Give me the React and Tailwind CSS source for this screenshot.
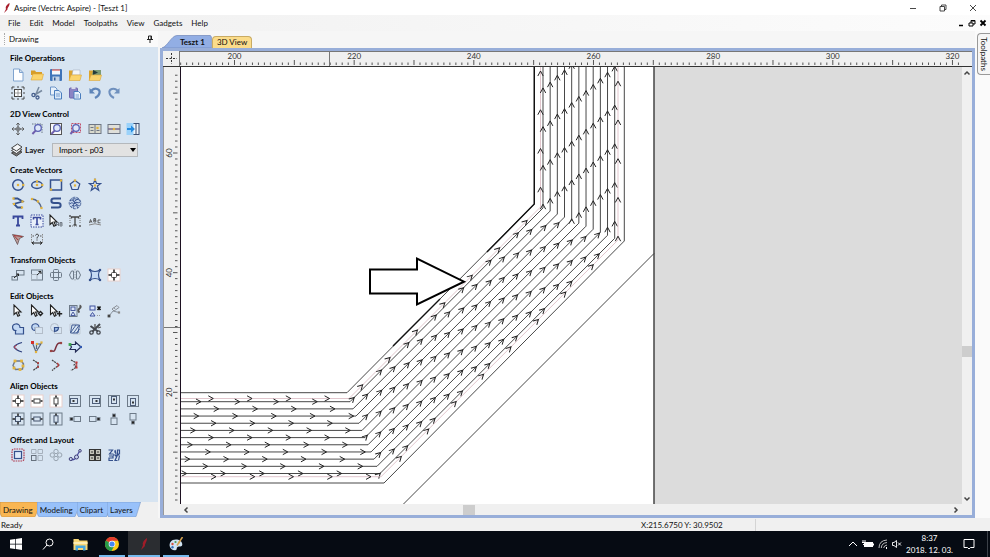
import { useState } from "react";

const NAVY = "#34508c";
const GOLD = "#e2b33c";
const DARK = "#222";
const GREY = "#6d7a88";

// small orange/gold node handle
const Dot = ({ x, y, c = GOLD, r = 1.1 }) => (
  <rect x={x - r} y={y - r} width={r * 2} height={r * 2} fill={c} stroke="none" />
);

const Cursor = ({ x = 0 }) => (
  <path d={`M${3 + x} 1v9.500l2.300-2 1.600 3.800 1.700-.8-1.600-3.500h3z`} fill="#fff" stroke={DARK} strokeWidth="1.100" />
);

const Ticks = () => (
  <path d="M7 1.500v2.500M7 10v2.500M1.500 7h2.500M10 7h2.500" stroke={DARK} strokeWidth="1.500" />
);

const Lens = () => (
  <>
    <circle cx="8" cy="6" r="3.300" fill="#dfe8fa" stroke="#5a62b4" strokeWidth="1.300" />
    <path d="M5.600 8.600 2.400 12" stroke="#6f5fae" strokeWidth="2" />
  </>
);

const Clip = ({ flip }) => (
  <g transform={flip ? "rotate(90 7 7)" : undefined}>
    <rect x="1.500" y="1.500" width="11" height="11" fill="none" stroke={GREY} />
    <rect x="2.500" y="4.500" width="7" height="5" fill="none" stroke="#4d5d78" />
    <path d="M4.500 7h2" stroke={DARK} strokeWidth="1.800" />
  </g>
);

const Framed = ({ children, soft }) => (
  <>
    <rect x="1" y="1" width="12" height="12" fill={soft ? "#fff" : "#d7e4f1"} stroke={soft ? "#ead0cc" : GREY} />
    {children}
  </>
);

const ICONS = {
  newFile: <path d="M2.500 1h6l3.500 3.500V13h-9.500zM8.500 1v3.500H12" fill="#fdfeff" stroke="#7fa3cf" />,
  open: <><path d="M1 2.500h4l1 1.500h6V7H1z" fill="#d79d27" /><path d="M1 12 3 6h10.500L12 12z" fill="#fbd46c" stroke="#dba63a" strokeWidth=".6" /></>,
  save: <><rect x="1" y="1" width="12" height="12" rx="1" fill="#3f74b9" /><rect x="3" y="1.500" width="8" height="5" fill="#f4f8fc" /><path d="M3 2h8" stroke="#d5544c" strokeWidth="1.200" /><rect x="3.500" y="8.500" width="7" height="4.500" fill="#c3d3e6" /><rect x="5" y="9.500" width="1.500" height="3" fill="#345b94" /></>,
  importVec: <><path d="M1 2.500h4l1 1.500h6V12H1z" fill="#dca42f" /><path d="M5 2h7v5H4z" fill="#f3f5f7" stroke="#9aa7b5" strokeWidth=".5" /><path d="M1 12.500 3 7h10.500L12 12.500z" fill="#fbd46c" stroke="#dba63a" strokeWidth=".6" /></>,
  importBmp: <><path d="M1 2.500h4l1 1.500h6V12H1z" fill="#dca42f" /><path d="M5 2h8v5H4z" fill="#7c9a74" /><path d="m5 2 5 2.500L5 7z" fill="#263c3c" /><path d="M1 12.500 3 7h10.500L12 12.500z" fill="#fbd46c" stroke="#dba63a" strokeWidth=".6" /></>,
  jobSetup: <><rect x="3.500" y="3.500" width="7" height="7" fill="#fff" stroke="#444" /><path d="M7 3v8M3 7h8" stroke="#777" strokeWidth=".7" /><path d="M1 3.500V1h2.500M10.500 1H13v2.500M13 10.500V13h-2.500M3.500 13H1v-2.500M6 1h2M6 13h2M1 6v2M13 6v2" stroke="#444" fill="none" /></>,
  cut: <><path d="m9 1-3.500 8M12 4.500 4.500 9" stroke="#77899f" strokeWidth="1.500" /><circle cx="3.500" cy="9" r="1.600" fill="none" stroke="#465f8d" strokeWidth="1.300" /><circle cx="7.500" cy="11.500" r="1.500" fill="none" stroke="#465f8d" strokeWidth="1.300" /></>,
  copy: <><path d="M1.500 1h4.500l2 2v6h-6.500z" fill="#e8f1fb" stroke="#6d95c8" /><path d="M5.500 4.500H10l2.500 2.500v6h-7z" fill="#d9e8f8" stroke="#4a7dbd" /><path d="M7 8h4M7 10h4" stroke="#5e8bc4" strokeWidth=".8" /></>,
  paste: <><rect x="1.500" y="2" width="8" height="10" rx=".8" fill="#8b84c4" stroke="#6d65ac" /><rect x="3.500" y="1" width="4" height="2" fill="#d9dcea" /><path d="M6 5.500h4.500l2 2v5.500H6z" fill="#eaf3fc" stroke="#4a7dbd" /><path d="M7.500 9h3.500M7.500 11h3.500" stroke="#5e8bc4" strokeWidth=".8" /></>,
  undo: <><path d="M3.500 4.500C7 1 12.500 3 11.500 7c-.5 2.500-2.500 4-4.500 5" fill="none" stroke="#5e84b8" strokeWidth="2.200" /><path d="M1.500 2v5.500h5.500z" fill="#5e84b8" /></>,
  redo: <><path d="M10.500 4.500C7 1 1.500 3 2.500 7c.5 2.500 2.500 4 4.500 5" fill="none" stroke="#6f90be" strokeWidth="2" /><path d="M12.500 2v5.500H7z" fill="#6f90be" /></>,
  pan: <path d="M7 1v12M1 7h12M5.300 2.800 7 1l1.700 1.800M5.300 11.200 7 13l1.700-1.800M2.800 5.300 1 7l1.800 1.700M11.200 5.300 13 7l-1.800 1.700M4.500 7 7 4.500 9.500 7 7 9.500z" stroke="#555" strokeWidth=".9" fill="none" />,
  zoomBox: <><path d="M2 2h10v10" stroke={GREY} strokeDasharray="1.500 1" fill="none" /><Lens /></>,
  zoomAll: <><rect x="1.500" y="1.500" width="11" height="11" fill="#f7f8fa" stroke="#555" /><Lens /></>,
  zoomSel: <><rect x="3.500" y="1.500" width="9" height="9" fill="none" stroke="#c0506c" strokeDasharray="2 1" /><Lens /></>,
  tileV: <><rect x="1" y="2.500" width="12" height="9" fill="#d9d9cc" stroke="#6e7684" /><path d="M7 2.500v9M2.500 5.500h3M2.500 8.500h3M8.500 8.500h3" stroke="#6e7684" /><Dot x={9.500} y={6} /></>,
  tileH: <><rect x="1" y="2.500" width="12" height="9" fill="#dfdfdb" stroke="#6e7684" /><path d="M1 7h12" stroke="#776a8d" strokeWidth="1.500" /><Dot x={7} y={7} /></>,
  dock: <><rect x="5.500" y="1.500" width="7.500" height="11" fill="#eef5fb" stroke="#3c4f73" /><path d="M10 1.500v11" stroke="#3c4f73" /><rect x=".5" y="1" width="7" height="12" fill="#9bd2fa" /><path d="M1 6h4V3.500L9 7l-4 3.500V8H1z" fill="#258be0" /></>,
  circle: <><circle cx="7" cy="7" r="5.300" fill="none" stroke={NAVY} strokeWidth="1.500" /><Dot x={7} y={7} /><Dot x={12.300} y={7} /></>,
  ellipse: <><ellipse cx="7" cy="7" rx="5.300" ry="3.500" fill="none" stroke={NAVY} strokeWidth="1.500" /><Dot x={7} y={7} /><Dot x={7} y={3.500} /><Dot x={12.300} y={7} /></>,
  rect: <><rect x="1.500" y="2" width="11" height="10" fill="none" stroke={NAVY} strokeWidth="1.500" /><Dot x={12} y={2.500} /><Dot x={2} y={11.500} /></>,
  polygon: <><path d="m7 2.500 4.800 3.400L10 11.500H4L2.200 5.900z" fill="none" stroke={NAVY} strokeWidth="1.200" /><Dot x={7} y={7.500} /><Dot x={7} y={2.500} /></>,
  star: <><path d="m7 1.500 1.500 4h4.300L9.400 8l1.300 4.300L7 9.700l-3.700 2.600L4.600 8 1.200 5.500h4.300z" fill="none" stroke={NAVY} strokeWidth="1.200" /><Dot x={7} y={7.500} /><Dot x={7} y={1.800} /></>,
  polyline: <><path d="M2.500 2.500h4L11.500 5.500 3 8l3.500 3.500H11" fill="none" stroke={NAVY} strokeWidth="1.800" /><Dot x={2.500} y={2.500} /><Dot x={11.500} y={5.500} /><Dot x={3} y={8} /><Dot x={11} y={11.500} /></>,
  arc: <><path d="M2 3c5 .5 8 4 9.500 9" fill="none" stroke="#56678a" strokeWidth="1.300" /><Dot x={2} y={3} /><Dot x={8} y={5.500} /><Dot x={11.500} y={12} /></>,
  curve: <path d="M12 2.500H5C1.500 2.500 1.500 7 5 7h4c3.500 0 3.500 4.500 0 4.500H2" fill="none" stroke={NAVY} strokeWidth="2" />,
  texture: <><circle cx="7" cy="7" r="5.800" fill="#c4d5ec" stroke={NAVY} strokeWidth=".8" strokeDasharray="3 1" /><path d="M2 5c3-3 3 2 5 0s3-2 5-.5M2 8c2-3 4 1 5-1s3 1 5-1M3.500 10.500c2-3 3 1 4-1s3 1 4 0M5 3c2-1 3 1 5 0M7 7c-3 2-1 4-2 5M7 7c3 1 1 3 3 5M7 7C5 5 6 4 4 2.500" fill="none" stroke={NAVY} strokeWidth="1" /></>,
  text: <path d="M2.500 5V2.500h9V5M7 2.500v9M5 11.500h4" fill="none" stroke="#39489c" strokeWidth="1.800" />,
  textBox: <><rect x="1" y="1" width="12" height="12" fill="#e9f0fa" stroke="#39489c" strokeDasharray="1.500 1" /><path d="M3.500 5.500V3.500h7v2M7 3.500v7M5.500 10.500h3" fill="none" stroke="#39489c" strokeWidth="1.600" /></>,
  textSelect: <><Cursor x={-2} /><path d="M7.500 12V8.500h2V12M7.500 10.500h2M11 12V8.500h2V12zM11 10h2" fill="none" stroke="#5e6470" strokeWidth=".8" /></>,
  textFit: <><path d="M3.500 4.500V3h7v1.500M7 3v8M5.500 11h3" fill="none" stroke="#444" strokeWidth="1.300" /><Dot x={2} y={2} c="#444" r={0.8} /><Dot x={12} y={2} c="#444" r={0.8} /><Dot x={2} y={12} c="#444" r={0.8} /><Dot x={12} y={12} c="#444" r={0.8} /><path d="M2 4v6M12 4v6M4 12h6" stroke="#777" strokeDasharray="1 1" /></>,
  textArc: <><path d="M1 11q6-2.500 12 0" stroke="#888" fill="none" /><path d="m1.500 9 1-3.500L4 8.500M1.800 7.800h2M5.800 8V4.500h1.800v1.700H5.800h2V8zM12.500 6H10v2.800h2.500" fill="none" stroke="#555" strokeWidth=".9" /></>,
  bitmapTrace: <><path d="m1.500 2.500 11 2-4 2-2 6z" fill="#b99d9b" stroke="#6a5356" strokeWidth=".8" /><path d="m3 3.500 4 4.500M3 3.500l8 1" stroke="#a63c3c" fill="none" /></>,
  dimension: <><path d="M1.500 2v10M12.500 2v10" stroke="#888" strokeDasharray="1.500 1" /><path d="M2.500 11h9M4 9.500 2 11l2 1.500M10 9.500l2 1.500-2 1.500" stroke={DARK} fill="none" /><path d="M5.500 3.500C6 1.500 9 2 8.500 4 8 5 7 5 7 6.500M7 7.500v1" stroke="#333" fill="none" /><path d="M2.500 4h1.500M10 4h1.500" stroke="#555" /></>,
  move: <><rect x="5.500" y="2.500" width="7.500" height="4.500" fill="#d6e3f0" stroke={GREY} /><rect x="1" y="8.500" width="5.500" height="3.500" fill="none" stroke={GREY} /><path d="m3 10 4.500-4M7.500 8V6h-2" stroke="#222" fill="none" /></>,
  size: <><rect x="1.500" y="2" width="11" height="10" fill="none" stroke={GREY} /><rect x="1.500" y="6.500" width="5.500" height="5.500" fill="none" stroke="#a5b0bb" /><path d="M7 7l4-3.500M8.500 3.500H11V6" fill="none" stroke="#222" /></>,
  rotate: <><rect x="4.500" y="1.500" width="5" height="11" rx="1" fill="none" stroke={GREY} /><rect x="1.500" y="4.500" width="11" height="5" rx="1" fill="none" stroke={GREY} /></>,
  mirror: <><path d="M5.500 3H3.500L1.500 7l2 4h2zM8.500 3h2l2 4-2 4h-2z" fill="none" stroke={GREY} /><path d="M7 1v12" stroke="#9aa4ae" strokeDasharray="1.500 1" /></>,
  distort: <><path d="M2 2q5 3 10 0-3 5 0 10-5-3-10 0 3-5 0-10z" fill="#c6daf4" stroke={NAVY} strokeWidth="1.200" /><Dot x={2} y={2} c={NAVY} /><Dot x={12} y={2} c={NAVY} /><Dot x={2} y={12} c={NAVY} /><Dot x={12} y={12} c={NAVY} /></>,
  align: <Framed soft><rect x="4.500" y="4.500" width="5" height="5" rx="1" fill="none" stroke="#444" /><Ticks /></Framed>,
  select: <Cursor x={0} />,
  nodeEdit: <><Cursor x={-1.500} /><path d="m10.500 7.500 2 2-2 2-2-2z" fill="none" stroke="#222" strokeWidth="1.400" /></>,
  moveEdit: <><Cursor x={-1.500} /><path d="M10.500 7v5.500M7.800 9.800h5.400" stroke="#222" strokeWidth="1.400" /></>,
  group: <><rect x="1.500" y="1.500" width="7.500" height="11" fill="none" stroke={GREY} /><rect x="3" y="3" width="4" height="3.500" fill="#dbe6fb" stroke="#4a5b9c" /><path d="m5 8 2.300 3.500H2.800z" fill="#dbe6fb" stroke="#4a5b9c" /><path d="M11.500 1.500q2.500 1 0 3t0 4" fill="none" stroke="#555" strokeWidth="1.900" /></>,
  ungroup: <><rect x="2" y="2" width="5" height="4" fill="#dbe6fb" stroke="#3c4f9c" /><path d="M4.500 8.500 7 12H2z" fill="#dbe6fb" stroke="#3c4f9c" /><path d="m9.500 2.500 3 3.500M12.500 2.500l-3 3.500" stroke="#111" strokeWidth="1.600" /><path d="M9 11.500h4" stroke="#999" strokeDasharray="1 1" /></>,
  measure: <><path d="M2 12 6 7l6 1.500" fill="none" stroke="#8a939e" /><Dot x={2} y={12} c="#444" r={1.400} /><Dot x={12} y={8.500} c="#888" /><path d="m5 5 5-3.500M7 7l5-3.500M5 5l2 2M10 1.500l2 2M7 3.500l1 1.500" fill="none" stroke="#8a8f96" /></>,
  weld: <path d="M5.500 8.500C1 9 0 3 4.500 2c2.500-.5 4.500 1 4.500 3.500h3.500v6.500h-8V8.500" fill="#c2d8f4" stroke={NAVY} strokeWidth="1.200" />,
  subtract: <><path d="M9 5.500C9 0 1.500 1 1.800 5.500c.2 2 1.700 3 3.500 3V5.500z" fill="#c2d8f4" stroke={NAVY} strokeWidth="1.100" /><rect x="5.500" y="5.500" width="7" height="6" fill="none" stroke="#b3bdc9" /></>,
  intersect: <><circle cx="5.500" cy="5.500" r="4" fill="none" stroke="#b3bdc9" /><rect x="5.500" y="5.500" width="7" height="6" fill="none" stroke="#b3bdc9" /><path d="M5.500 5.500h4q0 3.500-4 4z" fill="#9bbbe4" stroke={NAVY} strokeWidth="1.200" /></>,
  slice: <><path d="M2 2h7l3 3v7H5L2 9z" fill="none" stroke="#c2cbd6" /><path d="m3 10 5-7M5.500 11 11 3.500M8.500 11l3-4M4 3h7.500L10 11H2.500z" stroke={NAVY} fill="none" strokeWidth=".9" /></>,
  trim: <><path d="M12 2 4.500 9.500M2.500 4 10 9.500" stroke="#44484f" strokeWidth="2" /><circle cx="3.500" cy="10.500" r="1.700" fill="none" stroke="#44484f" strokeWidth="1.300" /><circle cx="10.500" cy="10.500" r="1.700" fill="none" stroke="#44484f" strokeWidth="1.300" /><path d="M7 2v4M10 6l3-1" stroke="#555" strokeWidth="1.300" /></>,
  extend: <><path d="M11 2.500Q4 4.500 3 7q1.500 3 8 5" fill="none" stroke="#2c3f7d" strokeWidth="1.300" /><path d="M6 5 3 7l3 2.500" fill="none" stroke="#b04050" strokeWidth="1" /></>,
  join: <><path d="m2.500 3 3.500 9 5.500-9M6.500 9V4h4" fill="none" stroke="#56657d" strokeWidth="1.200" /><Dot x={2.500} y={2.500} c="#d6302a" r={1.500} /><Dot x={6} y={12} /><Dot x={11.500} y={2.500} /><Dot x={7} y={4} /></>,
  fitCurve: <><path d="M2 10.500c4 2 4-1 5-3.500s2-5 5.500-3.500" fill="none" stroke="#7a2f3c" strokeWidth="1.500" /><Dot x={2} y={11} c="#944" /><Dot x={12} y={3} c="#944" /></>,
  joinMove: <><path d="M2 4.500h5.500V2L13 7l-5.500 5V9.500H2L3.500 7z" fill="#d2e4fb" stroke="#222b55" strokeWidth="1.200" /><Dot x={2} y={4.500} c="#38a34a" r={1.400} /><Dot x={13} y={7} c="#2f57b0" /></>,
  closeVec: <><path d="M4 3h6.500l2 3-1 5-7 .5-2.500-4z" fill="none" stroke="#6f7688" strokeWidth="1.400" /><Dot x={4} y={3} r={1.400} /><Dot x={10.500} y={3} r={1.400} /><Dot x={12} y={8} r={1.400} /><Dot x={9} y={11.500} r={1.400} /><Dot x={3} y={10} r={1.400} /></>,
  fillet1: <><path d="m3 2 5 3v4l-5 3.500" fill="none" stroke="#444" strokeWidth="1.200" strokeDasharray="2 .7" /><Dot x={8} y={5} c="#a33" r={0.9} /><Dot x={8} y={9} c="#a33" r={0.9} /></>,
  fillet2: <><path d="m3 2 7 5-7 5.500" fill="none" stroke="#444" strokeWidth="1.200" strokeDasharray="2 .7" /><path d="M8 5q3 2 0 4" stroke="#b33" fill="none" strokeWidth="1.200" /></>,
  fillet3: <><path d="m3 2 5.500 3L6 7l2.500 2L3 12.500" fill="none" stroke="#444" strokeWidth="1.200" strokeDasharray="2 .7" /><Dot x={8.500} y={4.500} c="#c33" r={1} /><Dot x={8.500} y={9.500} c="#c33" r={1} /><Dot x={8.500} y={7} c="#c33" r={0.800} /></>,
  alC: <Framed soft><rect x="4.500" y="4.500" width="5" height="5" rx="1" fill="none" stroke="#444" /><Ticks /></Framed>,
  alH: <Framed soft><rect x="4" y="5" width="6" height="4" fill="none" stroke="#444" /><path d="M1.500 7h2M10.500 7h2" stroke={DARK} strokeWidth="1.600" /></Framed>,
  alV: <Framed soft><rect x="5" y="4" width="4" height="6" fill="none" stroke="#444" /><path d="M7 1.500v2M7 10.500v2" stroke={DARK} strokeWidth="1.600" /></Framed>,
  alL: <Clip />,
  alR: <g transform="rotate(180 7 7)"><Clip /></g>,
  alT: <Clip flip />,
  alB: <g transform="rotate(180 7 7)"><Clip flip /></g>,
  inC: <Framed><rect x="4.500" y="4.500" width="5" height="5" fill="none" stroke="#44536c" /><Ticks /></Framed>,
  inH: <Framed><rect x="3.800" y="5" width="6.400" height="4" fill="none" stroke="#44536c" /><path d="M1.500 7h2M10.500 7h2" stroke={DARK} strokeWidth="1.600" /></Framed>,
  inV: <Framed><rect x="5" y="3.800" width="4" height="6.400" fill="none" stroke="#44536c" /><path d="M7 1.500v2M7 10.500v2" stroke={DARK} strokeWidth="1.600" /></Framed>,
  outL: <><rect x="6" y="4.500" width="6.500" height="5" fill="none" stroke={GREY} /><rect x="1.500" y="5" width="4" height="4" fill="#8b96a3" /><Dot x={3.500} y={7} c="#222" /></>,
  outR: <><rect x="1.500" y="4.500" width="6.500" height="5" fill="none" stroke={GREY} /><rect x="8.500" y="5" width="4" height="4" fill="#8b96a3" /><Dot x={10.500} y={7} c="#222" /></>,
  outT: <><rect x="4" y="6" width="6" height="6.500" fill="none" stroke={GREY} /><rect x="5" y="1.500" width="4" height="4" fill="#8b96a3" /><Dot x={7} y={3.500} c="#222" /></>,
  outB: <><rect x="4" y="1.500" width="6" height="6.500" fill="none" stroke={GREY} /><rect x="5" y="8.500" width="4" height="4" fill="#8b96a3" /><Dot x={7} y={10.500} c="#222" /></>,
  offset: <><rect x="1" y="1" width="12" height="12" rx="2" fill="none" stroke="#b03a50" strokeWidth="1.200" strokeDasharray="1.600 .8" /><rect x="3.500" y="3.500" width="7" height="7" fill="#dfebfa" stroke={NAVY} strokeWidth="1.200" /></>,
  array: <><path d="M1.500 1.500h4.500v4h-4.500zM8 1.500h4.500v4H8zM8 7.500h4.500v5H8z" fill="none" stroke="#a6b1bd" /><rect x="1.500" y="7.500" width="4.500" height="5" fill="none" stroke="#66707c" /></>,
  circArray: <><circle cx="7" cy="3.500" r="2.200" fill="none" stroke="#98a4b0" /><circle cx="7" cy="10.500" r="2.200" fill="none" stroke="#98a4b0" /><circle cx="3.300" cy="7" r="2.200" fill="none" stroke="#98a4b0" /><circle cx="10.700" cy="7" r="2.200" fill="none" stroke="#98a4b0" /></>,
  copyAlong: <><path d="M2 11.500q5 1 6.500-2.500T12 2.500" fill="none" stroke="#4a49a0" strokeWidth="1.300" /><circle cx="2.800" cy="11" r="1.600" fill="#c9d4ee" stroke="#3f3f78" /><circle cx="8.500" cy="9" r="2" fill="#c9d4ee" stroke="#3f3f78" /><circle cx="12" cy="2.800" r="1.300" fill="#c9d4ee" stroke="#3f3f78" /></>,
  nest: <><rect x="1" y="1" width="12" height="12" fill="#c9c9c0" /><path d="M1.500 1.500h5v5h-5zM7.500 1.500h5v5h-5zM1.500 7.500h5v5h-5zM7.500 7.500h5v5h-5z" fill="none" stroke="#333" strokeWidth="1.100" /><path d="M4 3v2M10 3v2M4 9v2M10 9v2" stroke="#333" /></>,
  trueShape: <path d="M1.500 2h4l-3 4h4M8 2l1 4M10.500 2h2v4h-2zM2 8h4v2H2v2.500h4M8 8h2l-2 4.500h2.500M12.500 7.500l-1 5M7 4h2M6 7h6" fill="none" stroke={NAVY} strokeWidth="1.200" />,
};

const SECTIONS = [
  {
    title: "File Operations",
    rows: [
      ["newFile", "open", "save", "importVec", "importBmp"],
      ["jobSetup", "cut", "copy", "paste", "undo", "redo"],
    ],
  },
  {
    title: "2D View Control",
    layer: true,
    rows: [["pan", "zoomBox", "zoomAll", "zoomSel", "tileV", "tileH", "dock"]],
  },
  {
    title: "Create Vectors",
    rows: [
      ["circle", "ellipse", "rect", "polygon", "star"],
      ["polyline", "arc", "curve", "texture"],
      ["text", "textBox", "textSelect", "textFit", "textArc"],
      ["bitmapTrace", "dimension"],
    ],
  },
  { title: "Transform Objects", rows: [["move", "size", "rotate", "mirror", "distort", "align"]] },
  {
    title: "Edit Objects",
    rows: [
      ["select", "nodeEdit", "moveEdit", "group", "ungroup", "measure"],
      ["weld", "subtract", "intersect", "slice", "trim"],
      ["extend", "join", "fitCurve", "joinMove"],
      ["closeVec", "fillet1", "fillet2", "fillet3"],
    ],
  },
  {
    title: "Align Objects",
    rows: [
      ["alC", "alH", "alV", "alL", "alR", "alT", "alB"],
      ["inC", "inH", "inV", "outL", "outR", "outT", "outB"],
    ],
  },
  { title: "Offset and Layout", rows: [["offset", "array", "circArray", "copyAlong", "nest", "trueShape"]] },
];

const MENU = ["File", "Edit", "Model", "Toolpaths", "View", "Gadgets", "Help"];
const PANEL_TABS = ["Drawing", "Modeling", "Clipart", "Layers"];

// drawing scale: pixels per millimetre
const SCALE = 5.983;
const STEP = 38.75;

// each pass runs along a horizontal leg, a 45 degree leg and a vertical leg
const PASSES = [
  { y: 398.5, cx: 349, x: 540.5, cy: 207, phase: 33.3, rapid: true },
  ...[21, 38.7, 18.7, 36, 15.3, 33.3, 12.3, 30.3, 9.7, 27.7, 6.7].map((phase, i) => ({
    y: 401.7 + i * 7.18,
    cx: 350 + i * 3,
    x: 543 + i * 7.17,
    cy: 208 + i * 3.03,
    phase,
  })),
  { y: 476.7, cx: 381, x: 618, cy: 240, phase: 36, rapid: true },
];

function arrowsFor({ y, cx, x, cy, phase }) {
  const leg1 = cx - 180;
  const leg2 = Math.hypot(x - cx, y - cy);
  const leg3 = cy - 67;
  const out = [];
  for (let d = phase; d < leg1 + leg2 + leg3 + 5; d += STEP) {
    if (d < leg1) out.push([180 + d, y, 0]);
    else if (d < leg1 + leg2) {
      const t = (d - leg1) / leg2;
      out.push([cx + (x - cx) * t, y + (cy - y) * t, -45]);
    } else out.push([x, cy - (d - leg1 - leg2), -90]);
  }
  return out;
}

function Toolpath() {
  return (
    <svg className="absolute inset-0 h-full w-full" aria-label="Toolpath preview">
      <g transform="translate(-180 -67)" fill="none" stroke="#333" strokeWidth="1">
        <path d="M180 60H654V1400H180z" fill="#fff" stroke="none" />
        <path d="M654 60V1400" stroke="#444" strokeWidth="1.5" />
        <path d="M654 253.500 402 505.500" strokeWidth=".9" />
        <path d="M180 392.700H347L534.300 204V60" strokeWidth=".9" />
        <path d="M534.300 60V204L487 252M440 299 393 346" stroke="#111" strokeWidth="1.400" />
        <path d="M180 483H384L624.300 241V60" strokeWidth=".9" />
        {PASSES.map((p, i) => (
          <g key={i}>
            <path
              d={`M180 ${p.y}H${p.cx}L${p.x} ${p.cy}V60`}
              stroke={p.rapid ? "#d9b8c0" : "#333"}
              strokeWidth={p.rapid ? 0.8 : 0.9}
            />
            {arrowsFor(p).map(([x, y, a], k) => (
              <path key={k} d="M-5-2.700 0 0-5 2.700" transform={`translate(${x} ${y}) rotate(${a})`} stroke="#222" />
            ))}
          </g>
        ))}
        <path d="M180.500 60V1400" stroke="#1c1020" strokeWidth="1" />
        <path
          d="M370 269.500H417V258.500L464 281.700 417 304.500V293.500H370z"
          fill="#fff" stroke="#000" strokeWidth="2"
        />
      </g>
    </svg>
  );
}

const range = (a, b) => Array.from({ length: b - a + 1 }, (_, i) => a + i);

function TopRuler() {
  return (
    <svg className="h-full w-full" fontSize="8" textAnchor="middle" fill="#333">
      {range(191, 321).map((n) => {
        const x = 54.5 + (n - 200) * SCALE;
        return (
          <g key={n}>
            <path d={`M${x} ${n % 10 ? 10.5 : 8}V13`} stroke="#555" />
            {n % 20 === 0 && <text x={x} y="7">{n}</text>}
          </g>
        );
      })}
      <path d="M149.500 0V14" stroke="#777" />
    </svg>
  );
}

function SideRuler() {
  return (
    <svg className="absolute inset-0 h-full w-full" fontSize="8" textAnchor="middle" fill="#333">
      {range(2, 73).map((n) => {
        const y = 86 + (60 - n) * SCALE;
        return (
          <g key={n}>
            <path d={`M${n % 10 ? 11 : 9} ${y}H13.5`} stroke="#555" />
            {n % 20 === 0 && <text transform={`translate(8 ${y}) rotate(-90)`}>{n}</text>}
          </g>
        );
      })}
      <path d="M0 260.500H16" stroke="#777" />
    </svg>
  );
}

function Chevron({ d }) {
  return (
    <svg viewBox="0 0 8 8" className="size-2" fill="none" stroke="#444" strokeWidth="1.500">
      <path d={d} />
    </svg>
  );
}

function ToolSection({ title, rows, layer }) {
  return (
    <section className="group pb-1.5">
      <h2 className="h-3 pl-0.5 text-[8px] leading-3 font-bold text-black group-first:mb-0.5">{title}</h2>
      {rows.map((row, i) => (
        <div key={i} className="grid w-[135px] grid-cols-7">
          {row.map((name) => (
            <button key={name} aria-label={name} className="flex h-[18px] items-center justify-center">
              <svg viewBox="0 0 14 14" className="size-[14px]">{ICONS[name]}</svg>
            </button>
          ))}
        </div>
      ))}
      {layer && (
        <div className="mt-1 flex h-4 items-center pl-0.5">
          <svg viewBox="0 0 14 14" className="size-[14px]" fill="#f4f6f8" stroke="#444">
            <path d="m1.500 10 5-3 5.500 2-5.500 4z" fill="#777" />
            <path d="m1.500 7.500 5-3 5.500 2-5.500 4z" />
            <path d="m1.500 5 6-4L12 4 6.500 8z" />
          </svg>
          <label htmlFor="layer" className="ml-px w-[27px] text-[8px] font-bold">Layer</label>
          <div className="relative">
            <select
              id="layer"
              className="h-[14px] w-[86px] appearance-none border border-[#b4b8bc] bg-[#e2e2e2] pl-1.5 text-[8px] leading-3 text-black"
            >
              <option>Import - p03</option>
            </select>
            <svg viewBox="0 0 6 4" className="pointer-events-none absolute top-[5px] right-0.5 h-1 w-1.5">
              <path d="M0 0h6L3 4z" />
            </svg>
          </div>
        </div>
      )}
    </section>
  );
}

function Sidebar() {
  const [tab, setTab] = useState("Drawing");
  return (
    <aside className="flex w-[158px] shrink-0 flex-col">
      <div className="flex h-4 items-center justify-between bg-[#fafafa] pr-1 pl-1 text-[8px]">
        <span className="flex items-center gap-1">
          <span className="h-3 border-l border-dotted border-[#aaa]" />
          Drawing
        </span>
        <svg viewBox="0 0 8 8" className="size-2" fill="none" stroke="#222">
          <path d="M2.500 1h3v3.500h-3zM1 4.500h6M4 4.500V8M5 1v3.500" />
        </svg>
      </div>
      <div className="min-h-0 flex-1 overflow-hidden bg-[#d7e4f1] pt-[5px] pl-2">
        {SECTIONS.map((s) => <ToolSection key={s.title} {...s} />)}
      </div>
      <nav className="flex h-4 items-stretch bg-[#f0f0f0] pb-px">
        {PANEL_TABS.map((t) => (
          <button key={t} onClick={() => setTab(t)} className="relative -mr-1 pr-1 pl-[3px] text-[8px] leading-[14px]">
            <svg viewBox="0 0 100 15" preserveAspectRatio="none" className="absolute inset-0 h-full w-full">
              <path
                d="M0 0H100L88 13Q87 15 84 15H6Q2 15 0 10z"
                fill={t === tab ? "#f9b652" : "#98c1fa"}
                stroke={t === tab ? "#b98542" : "#6f8fc0"}
                strokeWidth=".8"
              />
            </svg>
            <span className="relative pr-1">{t}</span>
          </button>
        ))}
      </nav>
    </aside>
  );
}

function Document() {
  return (
    <main className="flex min-w-0 flex-1 flex-col pt-[3px]">
      <div className="flex h-[14px] items-end pl-0.5">
        <button className="relative h-[13px] pr-[7px] pl-[18px] text-[8px] leading-3 font-bold">
          <svg viewBox="0 0 50 13" preserveAspectRatio="none" className="absolute inset-0 h-full w-full">
            <path d="M0 13C6 11 9 1 15 .5H48.500L49.500 2V13z" fill="#92aee4" stroke="#6f86b8" strokeWidth=".7" />
          </svg>
          <span className="relative">Teszt 1</span>
        </button>
        <button className="h-3 rounded-t-sm border border-b-0 border-[#c9ab63] bg-[#fbdc8a] px-1 text-[8px] leading-[11px]">
          3D View
        </button>
      </div>
      <div className="flex min-h-0 flex-1 flex-col border-[3px] border-[#98aed9] bg-[#f0f0f0]">
        <div className="flex h-4 shrink-0 border-b border-[#333]">
          <div className="flex w-[17px] shrink-0 items-center justify-center border-r border-[#777]">
            <svg viewBox="0 0 13 13" className="size-[13px]" stroke="#333" strokeDasharray="2 1.500">
              <path d="M6.500 1v11M1 6.500h11" />
            </svg>
          </div>
          <div className="min-w-0 flex-1 border-t border-[#777]"><TopRuler /></div>
        </div>
        <div className="flex min-h-0 flex-1">
          <div className="relative w-[17px] shrink-0 border-l border-[#999]"><SideRuler /></div>
          <div className="flex min-w-0 flex-1 flex-col">
            <div className="relative min-h-0 flex-1 overflow-hidden bg-[#dcdcdc]"><Toolpath /></div>
            <div className="flex h-[11px] shrink-0 items-center px-0.5">
              <Chevron d="M5.500 1.500 3 4l2.500 2.500" />
              <span className="grow-[35]" />
              <span className="h-2.5 w-3 bg-[#cdcdcd]" />
              <span className="grow-[61]" />
              <Chevron d="M2.500 1.500 5 4 2.500 6.500" />
            </div>
          </div>
          <div className="flex w-[10px] shrink-0 flex-col items-center pt-0.5 pb-3">
            <Chevron d="M1.500 5.500 4 3l2.500 2.500" />
            <span className="grow-[66]" />
            <span className="h-[11px] w-[10px] bg-[#cdcdcd]" />
            <span className="grow-[34]" />
            <Chevron d="M1.500 2.500 4 5l2.500-2.500" />
          </div>
        </div>
      </div>
    </main>
  );
}

function TaskButton({ label, active, running, children }) {
  return (
    <button
      aria-label={label}
      className={`flex w-8 flex-col items-center justify-between ${active ? "bg-[#2b2d31]" : ""}`}
    >
      <span className="flex flex-1 items-center pt-0.5">{children}</span>
      <span className={`h-0.5 ${active ? "w-full" : "w-[26px]"} ${running ? "bg-[#76b9ed]" : ""}`} />
    </button>
  );
}

function Taskbar() {
  return (
    <footer className="flex h-[26px] shrink-0 bg-[#060b13] text-white">
      <TaskButton label="Start">
        <svg viewBox="0 0 12 12" className="size-3" fill="#fff"><path d="M0 1.700 5 1v4.700H0zM5.700.9 12 0v5.700H5.700zM0 6.400h5V11l-5-.7zM5.700 6.400H12V12l-6.300-.9z" /></svg>
      </TaskButton>
      <TaskButton label="Search">
        <svg viewBox="0 0 12 12" className="size-3" fill="none" stroke="#fff"><circle cx="7.500" cy="4.500" r="3.500" /><path d="M5 7 1 11.500" /></svg>
      </TaskButton>
      <TaskButton label="File Explorer">
        <svg viewBox="0 0 15 13" className="h-[13px] w-[15px]">
          <path d="M.5 1h5l1 1.500h8V12H.5z" fill="#f8d775" />
          <path d="M.5 4h14v2H.5z" fill="#fdeeb4" />
          <path d="M2.500 7.500h10V12.500h-2.500V10h-5v2.500H2.500z" fill="#49a8de" />
        </svg>
      </TaskButton>
      <TaskButton label="Chrome" running>
        <svg viewBox="0 0 14 14" className="size-[14px]">
          <circle cx="7" cy="7" r="7" fill="#fbc916" />
          <path d="M7 7 .9 3.500A7 7 0 0 1 13.100 3.700H7z" fill="#e33b2e" />
          <path d="M7 7 .9 3.500A7 7 0 0 0 6.500 14L9.500 8.500z" fill="#279847" />
          <circle cx="7" cy="7" r="3.300" fill="#fff" />
          <circle cx="7" cy="7" r="2.600" fill="#4587f3" />
        </svg>
      </TaskButton>
      <TaskButton label="Aspire" running active>
        <svg viewBox="0 0 8 12" className="h-3 w-2"><path d="M7 0C4 2 2 5 3 7L1 12l4-4C4.500 6 7 4 7 0z" fill="#a01c28" /></svg>
      </TaskButton>
      <TaskButton label="Paint" running>
        <svg viewBox="0 0 15 14" className="h-[14px] w-[15px]">
          <path d="M7 2.500C2 2.500 0 6 .8 9.500c.7 3 4 4.500 6.200 3.500 1.500-.8 0-2 1.500-3s4.500.5 4.800-2.500C13.500 4.500 10 2.500 7 2.500z" fill="#cfe3f3" />
          <circle cx="3.500" cy="7" r="1.200" fill="#d2503f" /><circle cx="6.500" cy="5" r="1.100" fill="#4a9c58" />
          <circle cx="3.500" cy="10.300" r="1.200" fill="#3572b9" /><circle cx="10" cy="5.500" r="1.100" fill="#e8b23a" />
          <path d="M13.500 0 8 8.500" stroke="#d6a250" strokeWidth="1.500" />
        </svg>
      </TaskButton>
      <div className="ml-auto flex items-center text-[8px]">
        <div className="flex items-center gap-1 pr-1" aria-label="System tray">
          <svg viewBox="0 0 10 10" className="size-2.5" fill="none" stroke="#fff"><path d="M1 7 5 3l4 4" /></svg>
          <svg viewBox="0 0 12 10" className="h-2.5 w-3"><path d="M2 3h9v5H2z" fill="#fff" /><path d="M11.500 4.500v2M1 1v3M3 1v2M0 3.500h4v2H1" stroke="#fff" fill="none" /></svg>
          <svg viewBox="0 0 10 10" className="size-2.5" fill="none" stroke="#ccc" strokeWidth=".9"><path d="M1 9Q1 1.500 9 1M3.300 9Q3.500 4 9 3.500M5.600 9Q6 6.500 9 6" /><path d="M8 9h1" stroke="#fff" strokeWidth="2" /></svg>
          <svg viewBox="0 0 10 10" className="size-2.5" fill="none" stroke="#fff" strokeWidth=".9"><path d="M.5 3.500H2L4.500 1.500v7L2 6.500H.5zM6 3.500l3 3M9 3.500l-3 3" /></svg>
        </div>
        <div className="text-center leading-3 whitespace-nowrap">
          <div>8:37</div>
          <div>2018. 12. 03.</div>
        </div>
        <button aria-label="Notifications" className="ml-2.5">
          <svg viewBox="0 0 12 12" className="size-3" fill="none" stroke="#fff"><path d="M1 1.500h10v8H7.500L6 11 4.500 9.500H1z" /></svg>
        </button>
        <span className="mr-0.5 ml-3 h-[26px] w-px bg-[#3b4048]" />
      </div>
    </footer>
  );
}

export default function App() {
  return (
    <div className="flex h-screen flex-col overflow-hidden bg-[#f0f0f0] font-[Lato,sans-serif] text-[8px] text-[#111]">
      <header className="flex h-[15px] shrink-0 items-center bg-white pl-1">
        <svg viewBox="0 0 6 10" className="h-2.5 w-1.5"><path d="M5.500 0C3 1.500 1 4 2 6L0 10l3.500-3.500C3 5 6 3 5.500 0z" fill="#a81e2c" /></svg>
        <h1 className="ml-1">Aspire (Vectric Aspire) - [Teszt 1]</h1>
        <div className="ml-auto flex gap-[22px] pr-[13px]">
          <button aria-label="Minimize"><svg viewBox="0 0 8 8" className="size-2" stroke="#333" strokeWidth=".9"><path d="M1 4.500h6" /></svg></button>
          <button aria-label="Restore"><svg viewBox="0 0 8 8" className="size-2" fill="none" stroke="#333" strokeWidth=".9"><path d="M1 2.500h4.500V7H1zM2.500 2.500V1H7v4.500H5.500" /></svg></button>
          <button aria-label="Close"><svg viewBox="0 0 8 8" className="size-2" stroke="#333" strokeWidth=".9"><path d="m1 1 6 6M7 1 1 7" /></svg></button>
        </div>
      </header>
      <nav className="flex h-4 shrink-0 items-center bg-gradient-to-r from-[#f0f0f0] to-[#fcfcfc] pl-2">
        <div className="flex gap-[9px]">
          {MENU.map((m) => <button key={m}>{m}</button>)}
        </div>
        <div className="ml-auto flex gap-[3px] pr-[3px]">
          <button aria-label="Minimize document"><svg viewBox="0 0 8 8" className="size-2" stroke="#000" strokeWidth="1.500"><path d="M2 6.500h4" /></svg></button>
          <button aria-label="Restore document"><svg viewBox="0 0 8 8" className="size-2" fill="none" stroke="#000"><path d="M1 4h4v3H1zM3 4V1.500h4v3.500H5M3 2h4" /></svg></button>
          <button aria-label="Close document"><svg viewBox="0 0 8 8" className="size-2" stroke="#000" strokeWidth="1.800"><path d="m1.500 1.500 5 5M6.500 1.500l-5 5" /></svg></button>
        </div>
      </nav>
      <div className="flex min-h-0 flex-1 bg-[#f6f6f6]">
        <Sidebar />
        <span className="w-0.5 shrink-0" />
        <Document />
        <div className="flex w-[15px] shrink-0 items-start justify-end bg-[#fafafa] pt-0.5">
          <button className="h-[42px] w-[13px] rounded-l-sm border border-r-0 border-[#999] bg-[#f6f6f6] text-[8px] leading-3 [writing-mode:vertical-rl]">
            Toolpaths
          </button>
        </div>
      </div>
      <div className="flex h-[13px] shrink-0 items-center bg-[#f0f0f0] leading-3">
        <span className="flex-1 pl-px">Ready</span>
        <span className="w-[115px] border-r border-[#d4d4d4]">X:215.6750 Y: 30.9502</span>
        <span className="w-[234px]" />
      </div>
      <Taskbar />
    </div>
  );
}
